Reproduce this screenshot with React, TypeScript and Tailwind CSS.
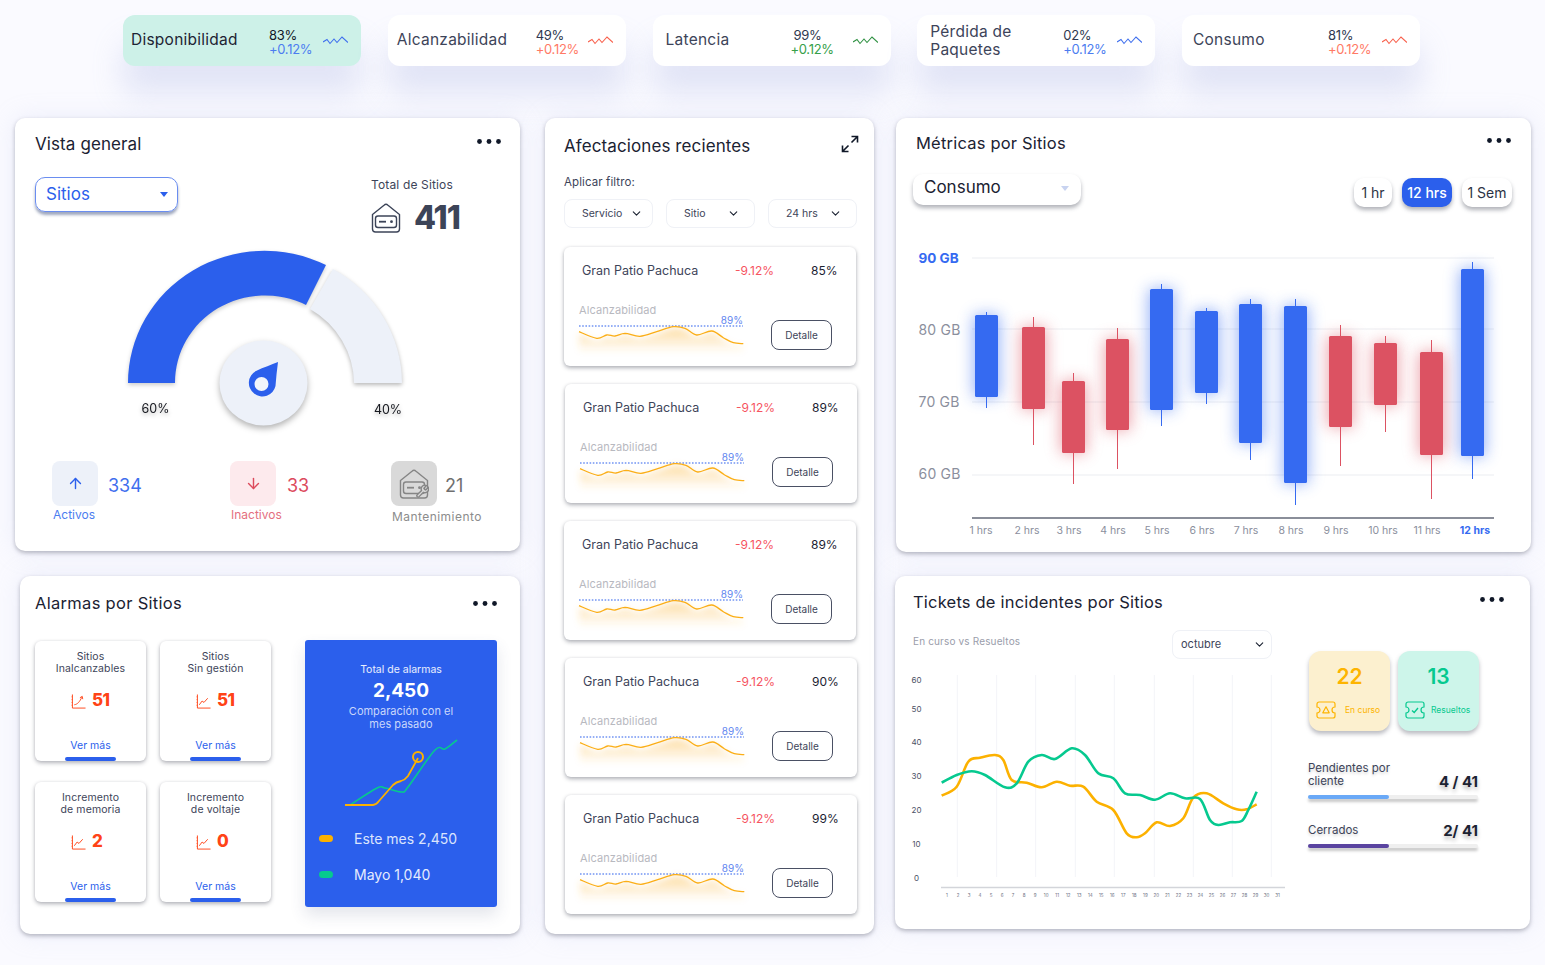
import { ChevronDown, ArrowUp, ArrowDown } from 'lucide-react';

type Pt = number[];

// catmull-rom through the points, good enough for the soft chart lines
function smooth(pts: Pt[]) {
	let d = `M${pts[0][0]} ${pts[0][1]}`;
	for (let i = 0; i < pts.length - 1; i++) {
		const p0 = pts[i - 1] || pts[i];
		const p1 = pts[i];
		const p2 = pts[i + 1];
		const p3 = pts[i + 2] || p2;
		const c1 = [p1[0] + (p2[0] - p0[0]) / 6, p1[1] + (p2[1] - p0[1]) / 6];
		const c2 = [p2[0] - (p3[0] - p1[0]) / 6, p2[1] - (p3[1] - p1[1]) / 6];
		d += ` C${c1[0].toFixed(1)} ${c1[1].toFixed(1)} ${c2[0].toFixed(1)} ${c2[1].toFixed(1)} ${p2[0].toFixed(1)} ${p2[1].toFixed(1)}`;
	}
	return d;
}

const tiles = [
	{ label: 'Disponibilidad', value: '83%', delta: '+0.12%', bg: 'bg-[#cdf1e8]', text: 'text-[#1d2433]', valueText: 'text-[#111827]', deltaText: 'text-[#4c7df0]', stroke: '#3f6fee', pad: 'pl-[8px] -mt-[1px]', num: '', valueNudge: '' },
	{ label: 'Alcanzabilidad', value: '49%', delta: '+0.12%', bg: 'bg-white', text: 'text-[#3d4459]', valueText: 'text-[#2f3850]', deltaText: 'text-[#ff7a66]', stroke: '#f8604c', pad: 'pl-[9px] -mt-[2px]', num: 'ml-[2px]', valueNudge: '' },
	{ label: 'Latencia', value: '99%', delta: '+0.12%', bg: 'bg-white', text: 'text-[#3d4459]', valueText: 'text-[#2f3850]', deltaText: 'text-[#36a04a]', stroke: '#2f9142', pad: 'pl-[13px] -mt-[2px]', num: '-ml-[8px]', valueNudge: 'ml-[3px]' },
	{ label: 'Pérdida de Paquetes', value: '02%', delta: '+0.12%', bg: 'bg-white', text: 'text-[#3d4459]', valueText: 'text-[#2f3850]', deltaText: 'text-[#4c7df0]', stroke: '#3f6fee', pad: 'pl-[13px] mt-[1px]', num: '', valueNudge: '' },
	{ label: 'Consumo', value: '81%', delta: '+0.12%', bg: 'bg-white', text: 'text-[#3d4459]', valueText: 'text-[#2f3850]', deltaText: 'text-[#ff7a66]', stroke: '#f8604c', pad: 'pl-[11px] -mt-[1px]', num: '', valueNudge: '' },
];

function Dots() {
	return (
		<svg width="24" height="5" viewBox="0 0 24 5" className="shrink-0">
			<circle cx="2.5" cy="2.5" r="2.4" fill="#101828" />
			<circle cx="12" cy="2.5" r="2.4" fill="#101828" />
			<circle cx="21.5" cy="2.5" r="2.4" fill="#101828" />
		</svg>
	);
}

function MiniZigzag({ stroke }: { stroke: string }) {
	return (
		<svg width="25" height="10" viewBox="0 0 25 10" fill="none">
			<path d="M0 6 L4 3.5 L7 7.5 L11 3 L14 6.5 L19 1 L25 6.5" stroke={stroke} strokeWidth="1.1" />
		</svg>
	);
}

function TopTile({ t }: { t: (typeof tiles)[number] }) {
	return (
		<div className={`${t.bg} w-[238px] h-[51px] rounded-xl shadow-[0_28px_30px_rgba(170,178,225,0.3)] grid grid-cols-[146px_54px_25px] items-center`}>
			<div className={`${t.pad} ${t.text} text-[15.5px] leading-[18px] tracking-[0.25px] pr-2`}>{t.label}</div>
			<div className={`${t.num} pt-[3px] text-[13px] leading-[14px] -tracking-[0.3px]`}>
				<div className={`${t.valueText} ${t.valueNudge}`}>{t.value}</div>
				<div className={t.deltaText}>{t.delta}</div>
			</div>
			<MiniZigzag stroke={t.stroke} />
		</div>
	);
}

function ServerIcon({ color, wrench }: { color: string; wrench?: boolean }) {
	return (
		<svg width="30" height="30" viewBox="0 0 30 30" fill="none" stroke={color} strokeWidth="1.4">
			<path d="M1.5 11.5 L13 2.2 a3 3 0 0 1 4 0 L28.5 11.5 V26 a3 3 0 0 1-3 3 H4.5 a3 3 0 0 1-3-3 z" />
			<rect x="4.5" y="13" width="21" height="11.5" rx="2.5" />
			<path d="M8 18.7 H15" strokeWidth="1.8" />
			<circle cx="20.5" cy="18.7" r="1.4" fill={color} stroke="none" />
			{wrench && (
				<g transform="translate(16 15) scale(0.62)" fill="#d9d9d9">
					<path d="M14.7 6.3a1 1 0 0 0 0 1.4l1.6 1.6a1 1 0 0 0 1.4 0l3.77-3.77a6 6 0 0 1-7.94 7.94l-6.91 6.91a2.12 2.12 0 0 1-3-3l6.91-6.91a6 6 0 0 1 7.94-7.94l-3.76 3.76z" strokeWidth="2.2" />
				</g>
			)}
		</svg>
	);
}

function Gauge() {
	return (
		<svg width="320" height="190" viewBox="110 240 320 190" className="ml-[95px] overflow-visible">
			<path d="M128 383 A136.5 132 0 0 1 326 265 L306 305 A90 87 0 0 0 175 383 Z" fill="#2b5fec" className="drop-shadow-[0_2px_2px_rgba(0,0,0,0.2)]" />
			<path d="M333 269 A136.5 132 0 0 1 402 383 L354 383 A90 87 0 0 0 310 309 Z" fill="#edf1f9" className="drop-shadow-[0_2px_2px_rgba(0,0,0,0.28)]" />
			<ellipse cx="263.5" cy="383" rx="44" ry="42.5" fill="#edf1f9" className="drop-shadow-[0_3px_3px_rgba(0,0,0,0.3)]" />
			<path d="M278 362 C277 370 276 378 275.5 386 A13.5 13.5 0 1 1 256 371 C264 367 271 365 278 362 Z" fill="#2b5fec" />
			<circle cx="261.5" cy="384" r="7" fill="#f2f5fb" />
			<text x="155.5" y="413" textAnchor="middle" fontSize="12.5" fill="#16181f" className="drop-shadow-[0_2px_2px_rgba(0,0,0,0.3)]">60%</text>
			<text x="388" y="414" textAnchor="middle" fontSize="12.5" fill="#16181f" className="drop-shadow-[0_2px_2px_rgba(0,0,0,0.3)]">40%</text>
		</svg>
	);
}

function VistaGeneral() {
	return (
		<div className="w-[505px] h-[433px] bg-white rounded-[10px] shadow-[0_2px_4px_rgba(60,64,80,0.35),0_0_24px_rgba(190,198,235,0.25)] pt-4">
			<div className="flex items-center justify-between pl-5 pr-[19px]">
				<div className="text-[17px] leading-5 text-[#1b2232] tracking-[0.1px]">Vista general</div>
				<div className="-mt-[6px]"><Dots /></div>
			</div>
			<div className="flex items-start h-[58px] mt-[23px] pl-5">
				<div className="w-[143px] h-[35px] rounded-[10px] border-[1.5px] border-[#6a8df0] shadow-[0_3px_3px_rgba(40,60,110,0.45)] flex items-center justify-between pl-[10px] pr-[9px] text-[#2b5fec] text-[17px]">
					Sitios
					<span className="w-0 h-0 border-x-[4.5px] border-x-transparent border-t-[5px] border-t-[#2b5fec]" />
				</div>
				<div className="ml-[193px]">
					<div className="text-[12px] leading-[15px] tracking-[0.15px] text-[#3d4459]">Total de Sitios</div>
					<div className="flex items-center mt-[9px]">
						<ServerIcon color="#3c4458" />
						<div className="ml-[13px] text-[32px] leading-[34px] font-extrabold text-[#3c4458] -tracking-[1px]">411</div>
					</div>
				</div>
			</div>
			<div className="mt-[5px]"><Gauge /></div>
			<div className="flex items-start mt-[31px] pl-[37px]">
				<div className="w-[178px]">
					<div className="flex items-center">
						<div className="w-[46px] h-[45px] rounded-lg bg-[#edf1f9] flex items-center justify-center"><ArrowUp size={17} strokeWidth={2} className="text-[#2b5fec]" /></div>
						<div className="ml-[10px] mt-[3px] text-[18px] text-[#3f6fee]">334</div>
					</div>
					<div className="ml-[1px] mt-[1px] text-[12px] leading-[15px] text-[#4c7df0]">Activos</div>
				</div>
				<div className="w-[161px]">
					<div className="flex items-center">
						<div className="w-[46px] h-[45px] rounded-lg bg-[#fdeaed] flex items-center justify-center"><ArrowDown size={17} strokeWidth={2} className="text-[#dc4a5c]" /></div>
						<div className="ml-[11px] mt-[3px] text-[18px] text-[#dc4a5c]">33</div>
					</div>
					<div className="ml-[1px] mt-[1px] text-[12px] leading-[15px] text-[#e46f80]">Inactivos</div>
				</div>
				<div>
					<div className="flex items-center">
						<div className="w-[46px] h-[45px] rounded-lg bg-[#d9d9d9] flex items-center justify-center"><ServerIcon color="#858585" wrench /></div>
						<div className="ml-2 mt-[3px] text-[18px] text-[#6f6f6f]">21</div>
					</div>
					<div className="ml-[1px] mt-[3px] text-[12px] leading-[15px] text-[#8c8c8c] tracking-[0.45px]">Mantenimiento</div>
				</div>
			</div>
		</div>
	);
}

function TrendIcon({ up }: { up?: boolean }) {
	return (
		<svg width="15" height="15" viewBox="0 0 16 16" fill="none" stroke="#ff4316" strokeWidth="1">
			<path d="M1.5 0.5 V15 H15.5" />
			<path d="M0.5 3 H1.5 M0.5 6 H1.5 M0.5 9 H1.5 M0.5 12 H1.5" strokeWidth="0.7" />
			{up ? <path d="M3.5 11.5 C7 11 9.5 8 11.5 3.5 M9.5 4 L12 2.5 L12.5 5.5" /> : <path d="M3.5 11.5 L6.5 7.5 L8.5 9 L12.5 4.5" />}
		</svg>
	);
}

const alarmTiles = [
	{ lines: ['Sitios', 'Inalcanzables'], value: '51', up: true },
	{ lines: ['Sitios', 'Sin gestión'], value: '51' },
	{ lines: ['Incremento', 'de memoria'], value: '2' },
	{ lines: ['Incremento', 'de voltaje'], value: '0' },
];

function AlarmTile({ a }: { a: (typeof alarmTiles)[number] }) {
	return (
		<div className="relative w-[111px] h-[120px] bg-white rounded-md shadow-[0_2px_4px_rgba(60,64,80,0.38),0_0_3px_rgba(60,64,80,0.08)] pt-[10px] flex flex-col items-center text-center">
			<div className="text-[10.5px] leading-[12px] tracking-[0.1px] text-[#3d4459]">
				<div>{a.lines[0]}</div>
				<div>{a.lines[1]}</div>
			</div>
			<div className="self-stretch flex items-center pl-[36px] gap-[6px] mt-[16px] h-5 text-[#ff4316] font-extrabold text-[17px] -tracking-[0.5px]">
				<TrendIcon up={a.up} />
				{a.value}
			</div>
			<div className="mt-auto mb-[9px] text-[10.5px] leading-[13px] text-[#2b5fec]">Ver más</div>
			<div className="absolute left-[30px] bottom-0 w-[51px] h-[4px] rounded-full bg-[#2b5fec]" />
		</div>
	);
}

function AlarmChart() {
	const green = [[350, 805], [377, 788], [385, 788], [402, 792], [408, 787], [435, 750], [445, 749], [457, 740]];
	return (
		<svg width="124" height="84" viewBox="340 735 124 84" fill="none" className="ml-[35px] mt-[4px]">
			<path d={smooth(green)} stroke="#06c98f" strokeWidth="1.6" />
			<path d="M345 805 H373 Q376 805 379 801 L393 785 Q396 782 401 781 Q405 780 408 776 L418 758" stroke="#fcb100" strokeWidth="1.8" />
			<circle cx="418" cy="757" r="5" stroke="#fcb100" strokeWidth="2" />
		</svg>
	);
}

function AlarmasPorSitios() {
	return (
		<div className="ml-[5px] mt-[25px] w-[500px] h-[358px] bg-white rounded-[10px] shadow-[0_2px_4px_rgba(60,64,80,0.35),0_0_24px_rgba(190,198,235,0.25)] pt-[17px]">
			<div className="flex items-center justify-between pl-[15px] pr-[23px]">
				<div className="text-[16.5px] leading-5 text-[#1b2232] tracking-[0.3px]">Alarmas por Sitios</div>
				<Dots />
			</div>
			<div className="flex items-start mt-[27px] pl-[15px]">
				<div className="grid grid-cols-[111px_111px] gap-x-[14px] gap-y-[21px] pt-[1px]">
					{alarmTiles.map((a) => <AlarmTile key={a.lines.join()} a={a} />)}
				</div>
				<div className="ml-[34px] w-[192px] h-[267px] rounded-[3px] bg-[#2b5fec] shadow-[0_8px_16px_rgba(60,70,110,0.14)] pt-[23px]">
					<div className="text-center text-[10.5px] leading-[14px] text-white/90">Total de alarmas</div>
					<div className="text-center text-[19px] leading-[24px] font-bold text-white mt-[2px]">2,450</div>
					<div className="text-center text-[11px] leading-[13px] text-[#c9d7fb] mt-[2px]">Comparación con el<br />mes pasado</div>
					<AlarmChart />
					<div className="flex items-center ml-[14px] mt-[7px] h-[24px] text-[14px] text-[#dbe4fd]">
						<span className="w-[14px] h-[7px] rounded-full bg-[#fcb100] mr-[21px]" />Este mes 2,450
					</div>
					<div className="flex items-center ml-[14px] mt-[12px] h-[24px] text-[14px] text-[#e6ecfe]">
						<span className="w-[14px] h-[7px] rounded-full bg-[#06c98f] mr-[21px]" />Mayo 1,040
					</div>
				</div>
			</div>
		</div>
	);
}

const sparkPts: Pt[] = [[117, 650], [170, 670], [200, 660], [225, 663], [255, 655], [300, 664], [350, 650], [400, 635], [435, 640], [470, 660], [515, 648], [550, 668], [580, 683], [610, 686]].map(([x, y]) => [x / 3 - 39, y / 3 - 200]);

function Spark({ id }: { id: string }) {
	const line = smooth(sparkPts);
	return (
		<svg width="170" height="50" viewBox="0 0 170 50" fill="none" className="overflow-visible -mt-[2px]">
			<defs>
				<linearGradient id={id} x1="0" y1="0" x2="0" y2="1">
					<stop offset="0" stopColor="#f9b233" stopOpacity="0.42" />
					<stop offset="1" stopColor="#f9b233" stopOpacity="0" />
				</linearGradient>
				<filter id={`${id}-blur`} x="-10%" y="-30%" width="120%" height="180%">
					<feGaussianBlur stdDeviation="3" />
				</filter>
			</defs>
			<path d={`${line} L164 36 L0 36 Z`} fill={`url(#${id})`} transform="translate(0 2)" filter={`url(#${id}-blur)`} />
			<path d={`M0 ${11} H164`} stroke="#2b5fec" strokeWidth="1" strokeDasharray="1.6 1.6" />
			<text x="164" y="9" textAnchor="end" fontSize="10" fill="#5f86f0">89%</text>
			<path d={line} stroke="#fbae17" strokeWidth="1.3" />
		</svg>
	);
}

const recientes = [
	{ value: '85%', inset: 'ml-[19px]' },
	{ value: '89%', inset: 'ml-[20px]' },
	{ value: '89%', inset: 'ml-[19px]' },
	{ value: '90%', inset: 'ml-[20px]' },
	{ value: '99%', inset: 'ml-[20px]' },
];

function FilterSelect({ label, pr }: { label: string; pr: string }) {
	return (
		<div className={`w-[89px] h-[29px] rounded-lg border border-[#eff1f6] flex items-center justify-between pl-[17px] ${pr} text-[10.5px] text-[#3d4459]`}>
			{label}
			<ChevronDown size={13} strokeWidth={2} className="text-[#1b2232]" />
		</div>
	);
}

function AfectacionCard({ r, idx }: { r: (typeof recientes)[number]; idx: number }) {
	return (
		<div className={`${r.inset} w-[292px] h-[119px] bg-white rounded-md shadow-[0_2px_4px_rgba(60,64,80,0.4),0_0_3px_rgba(60,64,80,0.08)]`}>
			<div className="flex items-center pt-[16px] pl-[18px] h-[32px] text-[12px]">
				<div className="w-[153px] text-[12.5px] text-[#3d4459]">Gran Patio Pachuca</div>
				<div className="w-[76px] text-[#f6545f]">-9.12%</div>
				<div className="text-[#1b2232]">{r.value}</div>
			</div>
			<div className="flex items-start pl-[15px] mt-[25px]">
				<div className="w-[192px]">
					<div className="text-[11px] leading-[13px] tracking-[0.1px] text-[#b8b9bf]">Alcanzabilidad</div>
					<Spark id={`spark-${idx}`} />
				</div>
				<div className="w-[61px] h-[30px] mt-[16px] rounded-lg border border-[#4a5064] flex items-center justify-center text-[10px] text-[#3d4459]">Detalle</div>
			</div>
		</div>
	);
}

function Afectaciones() {
	return (
		<div className="ml-[25px] w-[329px] h-[816px] bg-white rounded-[10px] shadow-[0_2px_4px_rgba(60,64,80,0.35),0_0_24px_rgba(190,198,235,0.25)] pt-[18px]">
			<div className="flex items-center justify-between pl-[19px] pr-[15px]">
				<div className="text-[17px] leading-5 text-[#1b2232] tracking-[0.1px]">Afectaciones recientes</div>
				<svg width="18" height="18" viewBox="0 0 18 18" fill="none" stroke="#101828" strokeWidth="1.6" className="-mt-[5px]">
					<path d="M1.5 16.5 L7.5 10.5 M1.5 10.5 V16.5 H7.5 M16.5 1.5 L10.5 7.5 M10.5 1.5 H16.5 V7.5" />
				</svg>
			</div>
			<div className="pl-[19px] mt-[18px] text-[11.5px] leading-[16px] tracking-[0.1px] text-[#3d4459]">Aplicar filtro:</div>
			<div className="flex pl-[19px] gap-[13px] mt-[9px]">
				<FilterSelect label="Servicio" pr="pr-[9px]" />
				<FilterSelect label="Sitio" pr="pr-[14px]" />
				<FilterSelect label="24 hrs" pr="pr-[14px]" />
			</div>
			<div className="flex flex-col gap-[18px] mt-[19px]">
				{recientes.map((r, i) => <AfectacionCard key={i} r={r} idx={i} />)}
			</div>
		</div>
	);
}

const candles = [
	{ x: 975, t: 315, b: 397, wt: 312, wb: 408, up: true },
	{ x: 1022, t: 327, b: 409, wt: 317, wb: 445 },
	{ x: 1062, t: 381, b: 453, wt: 373, wb: 484 },
	{ x: 1106, t: 339, b: 430, wt: 328, wb: 469 },
	{ x: 1150, t: 289, b: 410, wt: 284, wb: 426, up: true },
	{ x: 1195, t: 311, b: 393, wt: 308, wb: 404, up: true },
	{ x: 1239, t: 304, b: 443, wt: 299, wb: 460, up: true },
	{ x: 1284, t: 306, b: 483, wt: 299, wb: 505, up: true },
	{ x: 1329, t: 336, b: 427, wt: 325, wb: 466 },
	{ x: 1374, t: 343, b: 405, wt: 336, wb: 432 },
	{ x: 1420, t: 352, b: 455, wt: 340, wb: 499 },
	{ x: 1461, t: 269, b: 456, wt: 262, wb: 479, up: true },
];

const hourLabels = [981, 1027, 1069, 1113, 1157, 1202, 1246, 1291, 1336, 1383, 1427, 1475];

function CandleChart() {
	return (
		<svg width="635" height="310" viewBox="896 235 635 310" fill="none" className="block">
			<defs>
				<filter id="glow" x="-150%" y="-30%" width="400%" height="160%">
					<feGaussianBlur stdDeviation="8" />
				</filter>
			</defs>
			{[258, 329, 402, 475].map((y) => <line key={y} x1="972" x2="1494" y1={y} y2={y} stroke="#f2f3f6" strokeWidth="1.5" />)}
			{[['80 GB', 330], ['70 GB', 402], ['60 GB', 474]].map(([t, y]) => (
				<text key={t} x="918.5" y={Number(y) + 5} fontSize="14" letterSpacing="0.2" fill="#8b8f9d">{t}</text>
			))}
			<text x="918.5" y="263" fontSize="13.5" fontWeight="700" fill="#356af1">90 GB</text>
			{candles.map((c) => {
				const color = c.up ? '#356af1' : '#dc5262';
				return <rect key={`g${c.x}`} x={c.x - 1} y={c.t} width="25" height={c.b - c.t} fill={color} opacity="0.55" filter="url(#glow)" />;
			})}
			{candles.map((c) => {
				const color = c.up ? '#356af1' : '#dc5262';
				return (
					<g key={c.x}>
						<line x1={c.x + 11.5} x2={c.x + 11.5} y1={c.wt} y2={c.wb} stroke={color} strokeWidth="1" />
						<rect x={c.x} y={c.t} width="23" height={c.b - c.t} rx="1.5" fill={color} />
					</g>
				);
			})}
			<line x1="972" x2="1494" y1="518" y2="518" stroke="#8a8e99" strokeWidth="2" />
			{hourLabels.map((x, i) => (
				<text key={x} x={x} y="534" textAnchor="middle" fontSize="10.5" fontWeight={i === 11 ? 700 : 400} fill={i === 11 ? '#356af1' : '#8b8f9d'}>{`${i + 1} hrs`}</text>
			))}
		</svg>
	);
}

function Metricas() {
	return (
		<div className="ml-[22px] w-[635px] h-[434px] bg-white rounded-[10px] shadow-[0_2px_4px_rgba(60,64,80,0.35),0_0_24px_rgba(190,198,235,0.25)] pt-[15px]">
			<div className="flex items-center justify-between pl-5 pr-[20px]">
				<div className="text-[16.5px] leading-5 text-[#1b2232] tracking-[0.2px]">Métricas por Sitios</div>
				<div className="-mt-[5px]"><Dots /></div>
			</div>
			<div className="flex items-start h-[61px] mt-[21px] pl-[17px]">
				<div className="w-[168px] h-[31px] rounded-[10px] bg-white shadow-[0_3px_4px_rgba(60,64,80,0.4)] flex items-center justify-between pl-[11px] pr-[12px] pb-[3px] text-[17px] text-[#1b2232]">
					Consumo
					<span className="w-0 h-0 border-x-[4px] border-x-transparent border-t-[5px] border-t-[#c8d3f0]" />
				</div>
				<div className="flex ml-[273px] mt-[4px] gap-[10px] text-[14px]">
					<div className="w-[38px] h-[29px] rounded-[10px] bg-white shadow-[0_3px_4px_rgba(60,64,80,0.4)] flex items-center justify-center text-[#2c3345]">1 hr</div>
					<div className="w-[50px] h-[29px] rounded-[10px] bg-[#2b5fec] shadow-[0_3px_4px_rgba(60,64,80,0.4)] flex items-center justify-center text-white font-medium">12 hrs</div>
					<div className="w-[50px] h-[29px] rounded-[10px] bg-white shadow-[0_3px_4px_rgba(60,64,80,0.4)] flex items-center justify-center text-[#2c3345]">1 Sem</div>
				</div>
			</div>
			<CandleChart />
		</div>
	);
}

const at = (pts: Pt[]) => pts.map(([x, y]) => [890 + x / 3, 575 + y / 3]);

const orange = at([[155, 662], [200, 635], [235, 560], [270, 548], [315, 540], [340, 555], [365, 615], [410, 623], [455, 637], [500, 620], [540, 632], [580, 635], [620, 680], [670, 705], [710, 775], [740, 787], [765, 775], [800, 742], [840, 753], [880, 730], [910, 668], [950, 655], [1000, 685], [1040, 703], [1070, 703], [1100, 688]]);
const green = at([[155, 623], [200, 600], [245, 589], [285, 600], [345, 637], [380, 625], [415, 560], [455, 540], [495, 552], [545, 520], [585, 540], [625, 595], [670, 610], [705, 655], [750, 660], [795, 674], [840, 655], [885, 670], [930, 672], [960, 735], [985, 750], [1020, 742], [1055, 738], [1075, 705], [1100, 650]]);

function TicketChart() {
	const yLabels: [string, number][] = [['60', 680], ['50', 709], ['40', 742], ['30', 776], ['20', 810], ['10', 844], ['0', 878]];
	return (
		<svg width="385" height="240" viewBox="905 665 385 240" fill="none" className="block">
			{[202, 320, 437, 556, 673, 793, 910, 1027, 1144].map((x) => (
				<line key={x} x1={890 + x / 3} x2={890 + x / 3} y1="675" y2="877" stroke="#f3f4f8" strokeWidth="1" />
			))}
			{yLabels.map(([t, y]) => <text key={t} x="916.5" y={y + 3} textAnchor="middle" fontSize="8" fill="#4b5165">{t}</text>)}
			<path d={smooth(orange)} stroke="#fcb100" strokeWidth="2.6" />
			<path d={smooth(green)} stroke="#06c98f" strokeWidth="2.6" />
			<line x1="941" x2="1285" y1="887.5" y2="887.5" stroke="#d3d5da" strokeWidth="1.4" />
			{Array.from({ length: 31 }, (_, i) => (
				<text key={i} x={947 + i * 11.02} y="897" textAnchor="middle" fontSize="4.5" fill="#6b7080">{i + 1}</text>
			))}
		</svg>
	);
}

function TicketShape({ color, check }: { color: string; check?: boolean }) {
	return (
		<svg width="22" height="18" viewBox="0 0 22 18" fill="none" stroke={color} strokeWidth="1.2" className="shrink-0">
			<path d="M4 1 H18 a2 2 0 0 1 2 2 v3 a3 3 0 0 0 0 6 v3 a2 2 0 0 1-2 2 H4 a2 2 0 0 1-2-2 v-3 a3 3 0 0 0 0-6 V3 a2 2 0 0 1 2-2 z" />
			{check ? <path d="M8 9.5 L10.2 11.5 L14 7" strokeWidth="1.4" /> : <path d="M11 5.8 L14.2 11.8 H7.8 Z" strokeLinejoin="round" />}
		</svg>
	);
}

function ProgressRow({ label, value, fill, mt }: { label: React.ReactNode; value: string; fill: string; mt: string }) {
	return (
		<div className={`${mt} -ml-[1px] w-[170px]`}>
			<div className="flex items-end justify-between text-[11.5px] leading-[13px] text-[#3d4459] [text-shadow:0_2px_3px_rgba(0,0,0,0.18)]">
				<div>{label}</div>
				<div className="relative top-[3px] text-[15px] leading-[18px] font-bold text-[#1b2232] [text-shadow:0_3px_4px_rgba(0,0,0,0.28)]">{value}</div>
			</div>
			<div className="mt-[7px] h-[4px] bg-[#efefef] rounded-full shadow-[0_3px_3px_rgba(0,0,0,0.22)]">
				<div className={`h-full w-[81px] rounded-full ${fill}`} />
			</div>
		</div>
	);
}

function Tickets() {
	return (
		<div className="ml-[21px] mt-[24px] w-[635px] h-[353px] bg-white rounded-[10px] shadow-[0_2px_4px_rgba(60,64,80,0.35),0_0_24px_rgba(190,198,235,0.25)] pt-4">
			<div className="flex items-center justify-between pl-[18px] pr-[26px]">
				<div className="text-[16.5px] leading-5 text-[#1b2232] tracking-[0.2px]">Tickets de incidentes por Sitios</div>
				<div className="-mt-[5px]"><Dots /></div>
			</div>
			<div className="flex items-start">
				<div className="w-[395px] pl-[10px]">
					<div className="flex items-start h-[31px] mt-[22px]">
						<div className="ml-[8px] w-[259px] text-[10px] leading-[14px] tracking-[0.15px] text-[#9a9dab]">En curso vs Resueltos</div>
						<div className="w-[100px] h-[29px] -mt-[4px] rounded-lg border border-[#eff1f6] flex items-center justify-between pl-2 pr-[5px] text-[11px] text-[#3d4459]">
							octubre
							<ChevronDown size={13} strokeWidth={2} className="text-[#1b2232]" />
						</div>
					</div>
					<TicketChart />
				</div>
				<div className="ml-[19px] mt-[39px]">
					<div className="flex gap-[8px]">
						<div className="w-[81px] h-[80px] rounded-xl bg-[#fcf0cf] shadow-[0_3px_4px_rgba(60,64,80,0.35)] pt-[13px]">
							<div className="text-center text-[21px] leading-[25px] font-semibold text-[#fdb400]">22</div>
							<div className="flex items-center pl-[6px] mt-[12px] text-[8.5px] text-[#fdb400]">
								<TicketShape color="#fdb400" />
								<span className="ml-2">En curso</span>
							</div>
						</div>
						<div className="w-[81px] h-[80px] rounded-xl bg-[#cdf5ea] shadow-[0_3px_4px_rgba(60,64,80,0.35)] pt-[13px]">
							<div className="text-center text-[21px] leading-[25px] font-semibold text-[#06c98f]">13</div>
							<div className="flex items-center pl-[6px] mt-[12px] text-[8.5px] text-[#06c98f]">
								<TicketShape color="#06c98f" check />
								<span className="ml-[5px]">Resueltos</span>
							</div>
						</div>
					</div>
					<ProgressRow mt="mt-[31px]" label={<>Pendientes por<br />cliente</>} value="4 / 41" fill="bg-[#6aa9f7]" />
					<ProgressRow mt="mt-[20px]" label="Cerrados" value="2/ 41" fill="bg-[#5a44a0]" />
				</div>
			</div>
		</div>
	);
}

export default function App() {
	return (
		<div className="w-[1545px] h-[965px] overflow-hidden bg-[#fafaff] font-['Inter','Noto_Sans',sans-serif]">
			<div className="flex gap-[26.75px] pl-[123px] pt-[15px]">
				{tiles.map((t) => <TopTile key={t.label} t={t} />)}
			</div>
			<div className="flex mt-[52px] pl-[15px]">
				<div>
					<VistaGeneral />
					<AlarmasPorSitios />
				</div>
				<Afectaciones />
				<div>
					<Metricas />
					<Tickets />
				</div>
			</div>
		</div>
	);
}
